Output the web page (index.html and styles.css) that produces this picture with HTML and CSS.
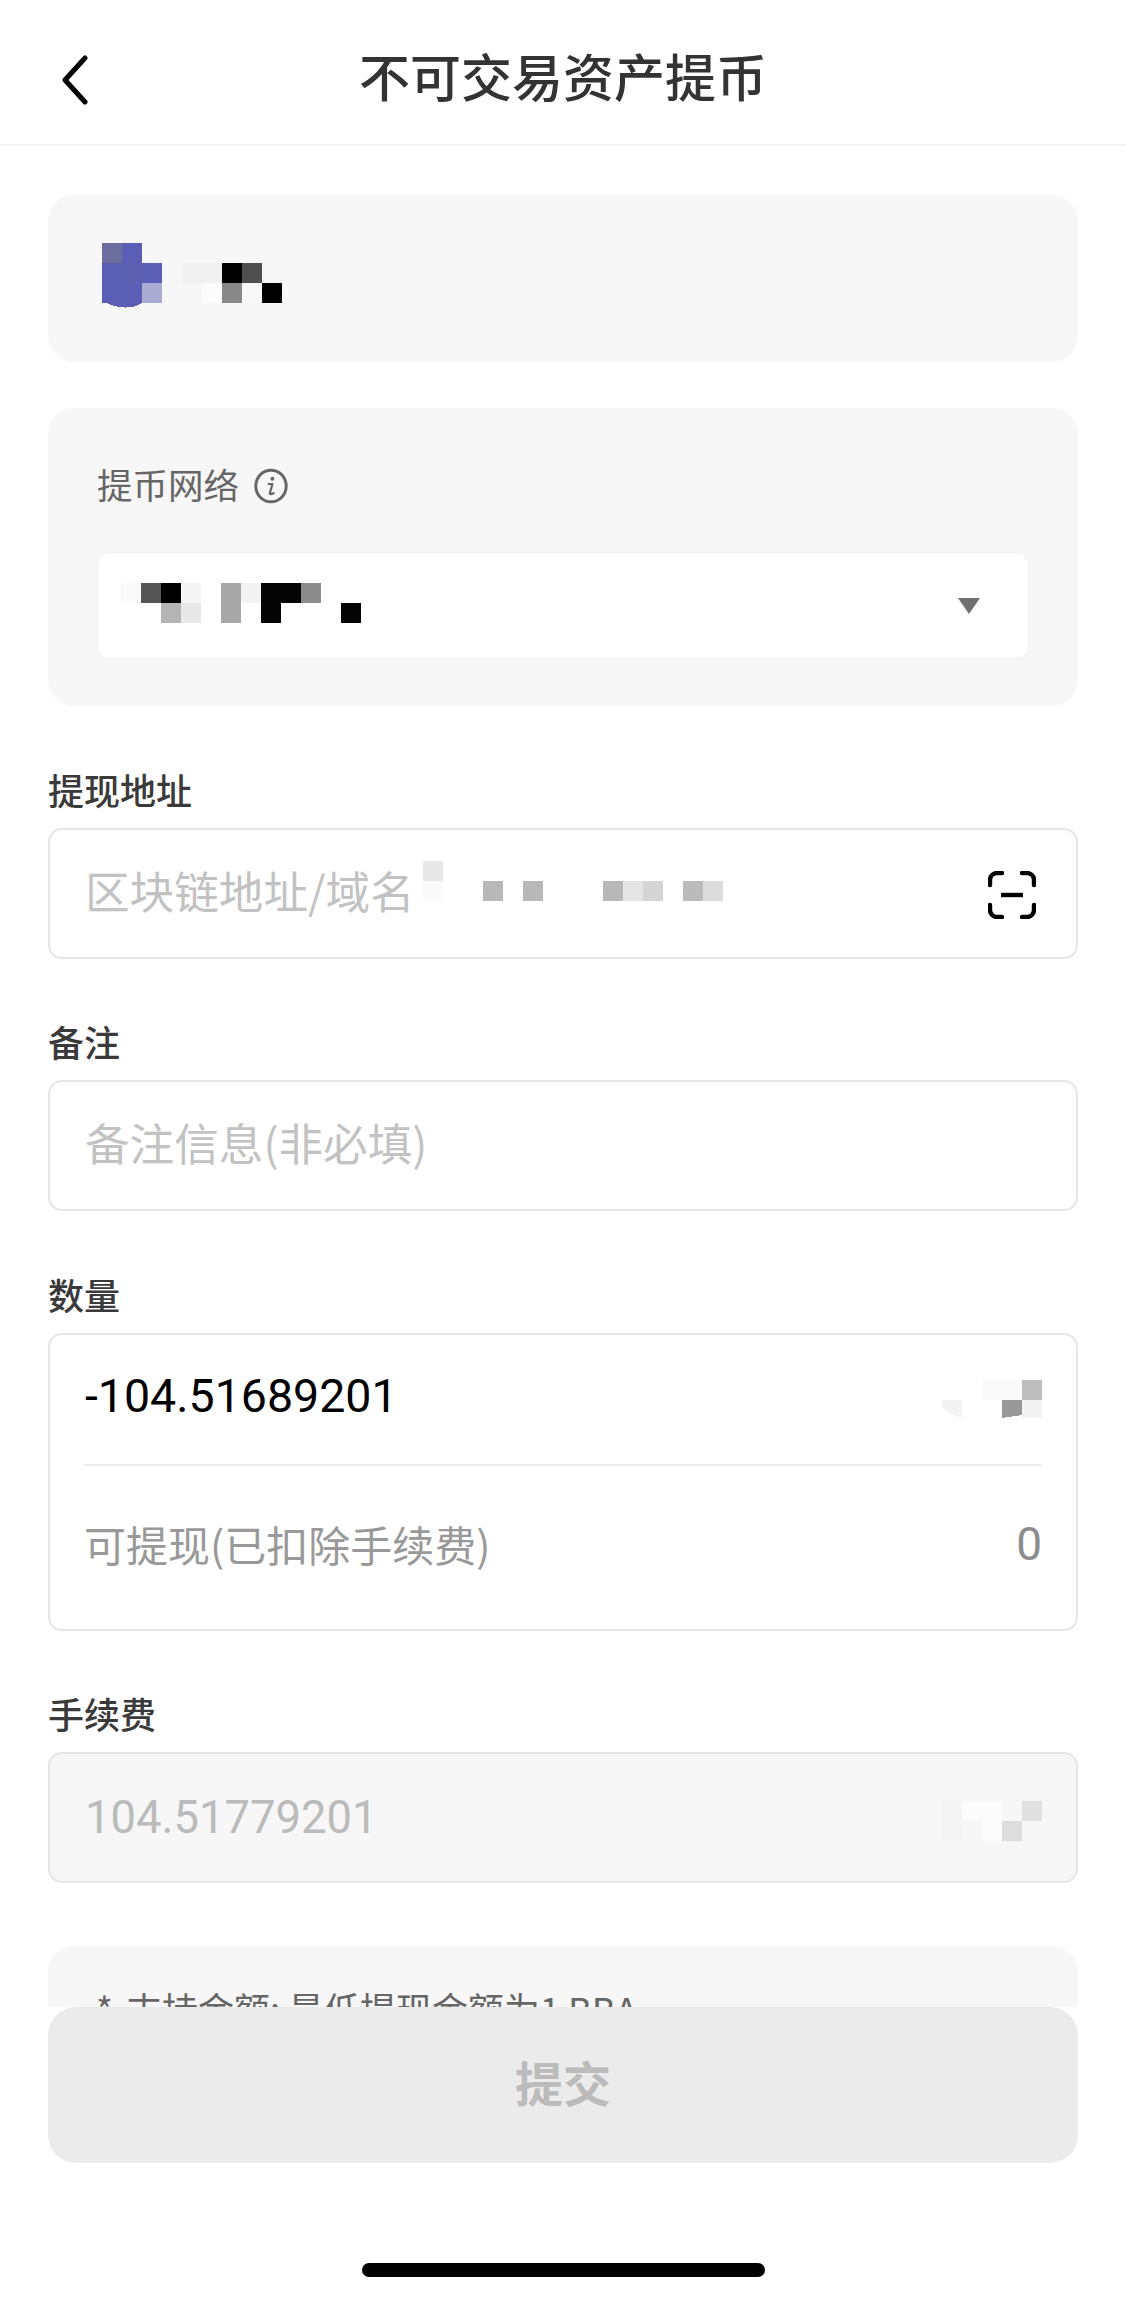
FILE: index.html
```html
<!DOCTYPE html>
<html lang="zh-CN">
<head>
	<meta charset="UTF-8">
	<title>不可交易资产提币</title>
	<link rel="stylesheet" href="styles.css">
</head>
<body>
<div class="page">
	<div class="header">
		<svg class="back" width="26" height="50" viewBox="0 0 26 50">
			<path d="M23 3 L3 25 L23 47" fill="none" stroke="#000" stroke-width="5" stroke-linecap="round" stroke-linejoin="round"/>
		</svg>
		<h1 class="title">不可交易资产提币</h1>
	</div>

	<div class="content">
		<!-- 币种 -->
		<div class="card coin">
			<svg class="mosaic" width="180" height="66" viewBox="0 0 180 66">
				<path d="M0 58 Q24 70 40 60 L0 58Z" fill="#5b5eb5"/>
				<rect x="0" y="0" width="40" height="60" fill="#5b5eb5"/>
				<rect x="0" y="0" width="20" height="20" fill="#6a6d9e"/>
				<rect x="20" y="20" width="20" height="20" fill="#5c5fb0"/>
				<rect x="40" y="20" width="20" height="20" fill="#5b5eb5"/>
				<rect x="40" y="40" width="20" height="20" fill="#a9abd3"/>
				<rect x="80" y="20" width="40" height="20" fill="#f1f1f1"/>
				<rect x="100" y="40" width="20" height="20" fill="#fcfcfc"/>
				<rect x="120" y="20" width="20" height="20" fill="#000"/>
				<rect x="140" y="20" width="20" height="20" fill="#4f4f4f"/>
				<rect x="120" y="40" width="20" height="20" fill="#888"/>
				<rect x="140" y="40" width="20" height="20" fill="#f8f8f8"/>
				<rect x="160" y="40" width="20" height="20" fill="#000"/>
			</svg>
		</div>

		<!-- 提币网络 -->
		<div class="card network">
			<div class="network-label">
				<span>提币网络</span>
				<svg width="34" height="36" viewBox="0 0 34 36">
					<ellipse cx="17" cy="18" rx="15.2" ry="15.8" fill="none" stroke="#666" stroke-width="3"/>
					<circle cx="18.4" cy="10.8" r="2" fill="#666"/>
					<path d="M14.6 16 H18.4 L15.8 25.4 Q15.6 26.8 19.6 25.2" fill="none" stroke="#666" stroke-width="2.2" stroke-linecap="round" stroke-linejoin="round"/>
				</svg>
			</div>
			<div class="select">
				<svg class="mosaic select-mosaic" width="240" height="40" viewBox="0 0 240 40">
					<rect x="0" y="0" width="20" height="20" fill="#fafafa"/>
					<rect x="20" y="0" width="20" height="20" fill="#555"/>
					<rect x="40" y="0" width="20" height="20" fill="#000"/>
					<rect x="60" y="0" width="20" height="20" fill="#f5f5f5"/>
					<rect x="40" y="20" width="20" height="20" fill="#b5b5b5"/>
					<rect x="60" y="20" width="20" height="20" fill="#e8e8e8"/>
					<rect x="100" y="0" width="20" height="40" fill="#a8a8a8"/>
					<rect x="120" y="0" width="20" height="20" fill="#f3f3f3"/>
					<rect x="140" y="0" width="40" height="20" fill="#050505"/>
					<rect x="140" y="20" width="20" height="20" fill="#050505"/>
					<rect x="180" y="0" width="20" height="20" fill="#8c8c8c"/>
					<rect x="220" y="20" width="20" height="20" fill="#050505"/>
				</svg>
				<svg class="arrow" width="24" height="18" viewBox="0 0 24 18">
					<path d="M1 1 H23 L12 17Z" fill="#707070"/>
				</svg>
			</div>
		</div>

		<div class="field">
			<div class="field-label">提现地址</div>
			<div class="input">
				<span class="hint">区块链地址/域名</span>
				<svg class="mosaic hint-mosaic" width="300" height="40" viewBox="0 0 300 40">
					<rect x="0" y="0" width="20" height="20" fill="#e8e8e8"/>
					<rect x="0" y="20" width="20" height="20" fill="#fafafa"/>
					<rect x="60" y="20" width="20" height="20" fill="#b8b8b8"/>
					<rect x="100" y="20" width="20" height="20" fill="#b8b8b8"/>
					<rect x="180" y="20" width="20" height="20" fill="#b8b8b8"/>
					<rect x="200" y="20" width="20" height="20" fill="#e5e5e5"/>
					<rect x="220" y="20" width="20" height="20" fill="#d5d5d5"/>
					<rect x="260" y="20" width="20" height="20" fill="#bbb"/>
					<rect x="280" y="20" width="20" height="20" fill="#dcdcdc"/>
				</svg>
				<svg class="scan" width="48" height="48" viewBox="0 0 48 48">
					<path d="M2 14 V9 a7 7 0 0 1 7-7 H14 M34 2 H39 a7 7 0 0 1 7 7 V14 M46 34 V39 a7 7 0 0 1-7 7 H34 M14 46 H9 a7 7 0 0 1-7-7 V34" fill="none" stroke="#000" stroke-width="4.4" stroke-linecap="round"/>
					<path d="M13 24 H35" fill="none" stroke="#000" stroke-width="4.4"/>
				</svg>
			</div>
		</div>

		<div class="field">
			<div class="field-label">备注</div>
			<div class="input">
				<span class="hint">备注信息(非必填)</span>
			</div>
		</div>

		<div class="field">
			<div class="field-label">数量</div>
			<div class="amount-box">
				<div class="amount-row">
					<span class="amount">-104.51689201</span>
					<svg class="mosaic side-mosaic" width="100" height="38" viewBox="0 0 100 38">
						<rect x="40" y="0" width="40" height="20" fill="#fafafa"/>
						<rect x="80" y="0" width="20" height="20" fill="#bdbdbd"/>
						<path d="M0 20 H20 V38 Q6 34 0 26Z" fill="#f3f3f3"/>
						<path d="M60 20 H80 V35 L60 38Z" fill="#999"/>
						<rect x="80" y="20" width="20" height="18" fill="#f3f3f3"/>
					</svg>
				</div>
				<div class="amount-row">
					<span class="available">可提现(已扣除手续费)</span>
					<span class="available-num">0</span>
				</div>
			</div>
		</div>

		<div class="field">
			<div class="field-label">手续费</div>
			<div class="input disabled">
				<span class="fee">104.51779201</span>
				<svg class="mosaic side-mosaic" width="100" height="40" viewBox="0 0 100 40">
					<rect x="0" y="0" width="20" height="40" fill="#f5f5f5"/>
					<rect x="20" y="0" width="40" height="20" fill="#fcfcfc"/>
					<rect x="80" y="0" width="20" height="20" fill="#e0e0e0"/>
					<rect x="40" y="20" width="20" height="20" fill="#fcfcfc"/>
					<rect x="60" y="20" width="20" height="20" fill="#ddd"/>
				</svg>
			</div>
		</div>

		<div class="card notice">
			<p><i>*</i>支持金额: 最低提现金额为1 BBA</p>
			<p><i>*</i>请仔细核对提现地址</p>
		</div>
	</div>

	<!-- 底部按钮 -->
	<div class="footer">
		<button class="submit">提交</button>
		<div class="home-bar"></div>
	</div>
</div>
</body>
</html>
```

FILE: styles.css
```css
body,h1,p{
	margin: 0;
	padding: 0;
}
body{
	background: #fff;
	font-family: "Noto Sans CJK SC", "Liberation Sans", sans-serif;
}
.page{
	width: 1126px;
	height: 2302px;
	position: relative;
	overflow: hidden;
}
.mosaic{
	display: block;
	flex: none;
	shape-rendering: crispEdges;
}
.header{
	height: 146px;
	border-bottom: 2px solid #f3f3f3;
	box-sizing: border-box;
	display: grid;
	grid-template-columns: 1fr auto 1fr;
	align-items: center;
	padding-left: 62px;
}
.back{
	display: block;
	margin-top: 16px;
}
.title{
	font-size: 51px;
	font-weight: 500;
	color: #333;
	line-height: 70px;
	margin-right: 62px;
	margin-top: 6px;
}
.content{
	padding: 49px 48px 0;
}
.card{
	background: #f7f7f7;
	border-radius: 26px;
}
.coin{
	height: 167px;
	box-sizing: border-box;
	padding: 48px 54px 0;
	margin-bottom: 46px;
}
.network{
	height: 298px;
	box-sizing: border-box;
	padding: 60px 49px 0;
}
.network-label{
	display: flex;
	align-items: center;
	gap: 15px;
	height: 36px;
	margin-bottom: 48px;
	font-size: 35.5px;
	color: #666;
}
.network-label span{
	margin-bottom: 5px;
}
.network-label svg{
	display: block;
}
.select{
	height: 107px;
	box-sizing: border-box;
	background: #fff;
	border: 1px solid #efefef;
	border-radius: 12px;
	display: flex;
	align-items: center;
	justify-content: space-between;
	padding: 0 47px 0 23px;
}
.select-mosaic{
	margin-bottom: 6px;
}
.field{
	margin-top: 59.5px;
}
.field-label{
	height: 50px;
	line-height: 46px;
	margin-bottom: 12px;
	font-size: 36px;
	font-weight: 500;
	color: #3a3a3a;
}
.input{
	height: 131px;
	box-sizing: border-box;
	background: #fff;
	border: 2px solid #e6e6e6;
	border-radius: 14px;
	display: flex;
	align-items: center;
	padding: 0 34px 0 35px;
}
.input.disabled{
	background: #f7f7f7;
	justify-content: space-between;
}
.hint{
	font-size: 44.6px;
	color: #c2c2c2;
	margin-bottom: 8px;
}
.hint-mosaic{
	margin-left: 8px;
	margin-bottom: 24px;
}
.scan{
	margin-left: auto;
	margin-right: 6px;
	margin-top: 4px;
	display: block;
}
.side-mosaic{
	margin-top: 7px;
}
.fee{
	font-family: Roboto, sans-serif;
	font-size: 45.4px;
	color: #bbb;
}
.amount-box{
	height: 298px;
	box-sizing: border-box;
	background: #fff;
	border: 2px solid #e6e6e6;
	border-radius: 14px;
	padding: 0 34px;
}
.amount-row{
	display: flex;
	align-items: center;
	justify-content: space-between;
	box-sizing: border-box;
	padding-bottom: 8px;
}
.amount-row:first-child{
	height: 131px;
	border-bottom: 2px solid #ededed;
}
.amount-row:last-child{
	height: 163px;
}
.amount{
	font-family: Roboto, sans-serif;
	font-size: 46.5px;
	color: #000;
	margin-left: 1px;
	margin-top: 2px;
}
.available{
	font-size: 42px;
	color: #999;
}
.available-num{
	font-family: Roboto, sans-serif;
	font-size: 46px;
	color: #8c8c8c;
	margin-top: 2px;
}
.notice{
	margin-top: 63px;
	padding: 37px 48px;
	font-size: 36px;
	line-height: 50px;
	color: #666;
}
.notice i{
	font-style: normal;
	display: inline-block;
	width: 30px;
}
.footer{
	position: absolute;
	left: 0;
	right: 0;
	bottom: 0;
	height: 295px;
	box-sizing: border-box;
	background: #fff;
	padding: 0 48px;
}
.submit{
	display: block;
	width: 100%;
	height: 156px;
	border: 0;
	border-radius: 28px;
	background: #ebebeb;
	color: #bbb;
	font-family: inherit;
	font-size: 48px;
	font-weight: 700;
	padding: 0 0 8px;
}
.home-bar{
	width: 403px;
	height: 14px;
	border-radius: 7px;
	background: #000;
	margin: 100px auto 0;
}
```
